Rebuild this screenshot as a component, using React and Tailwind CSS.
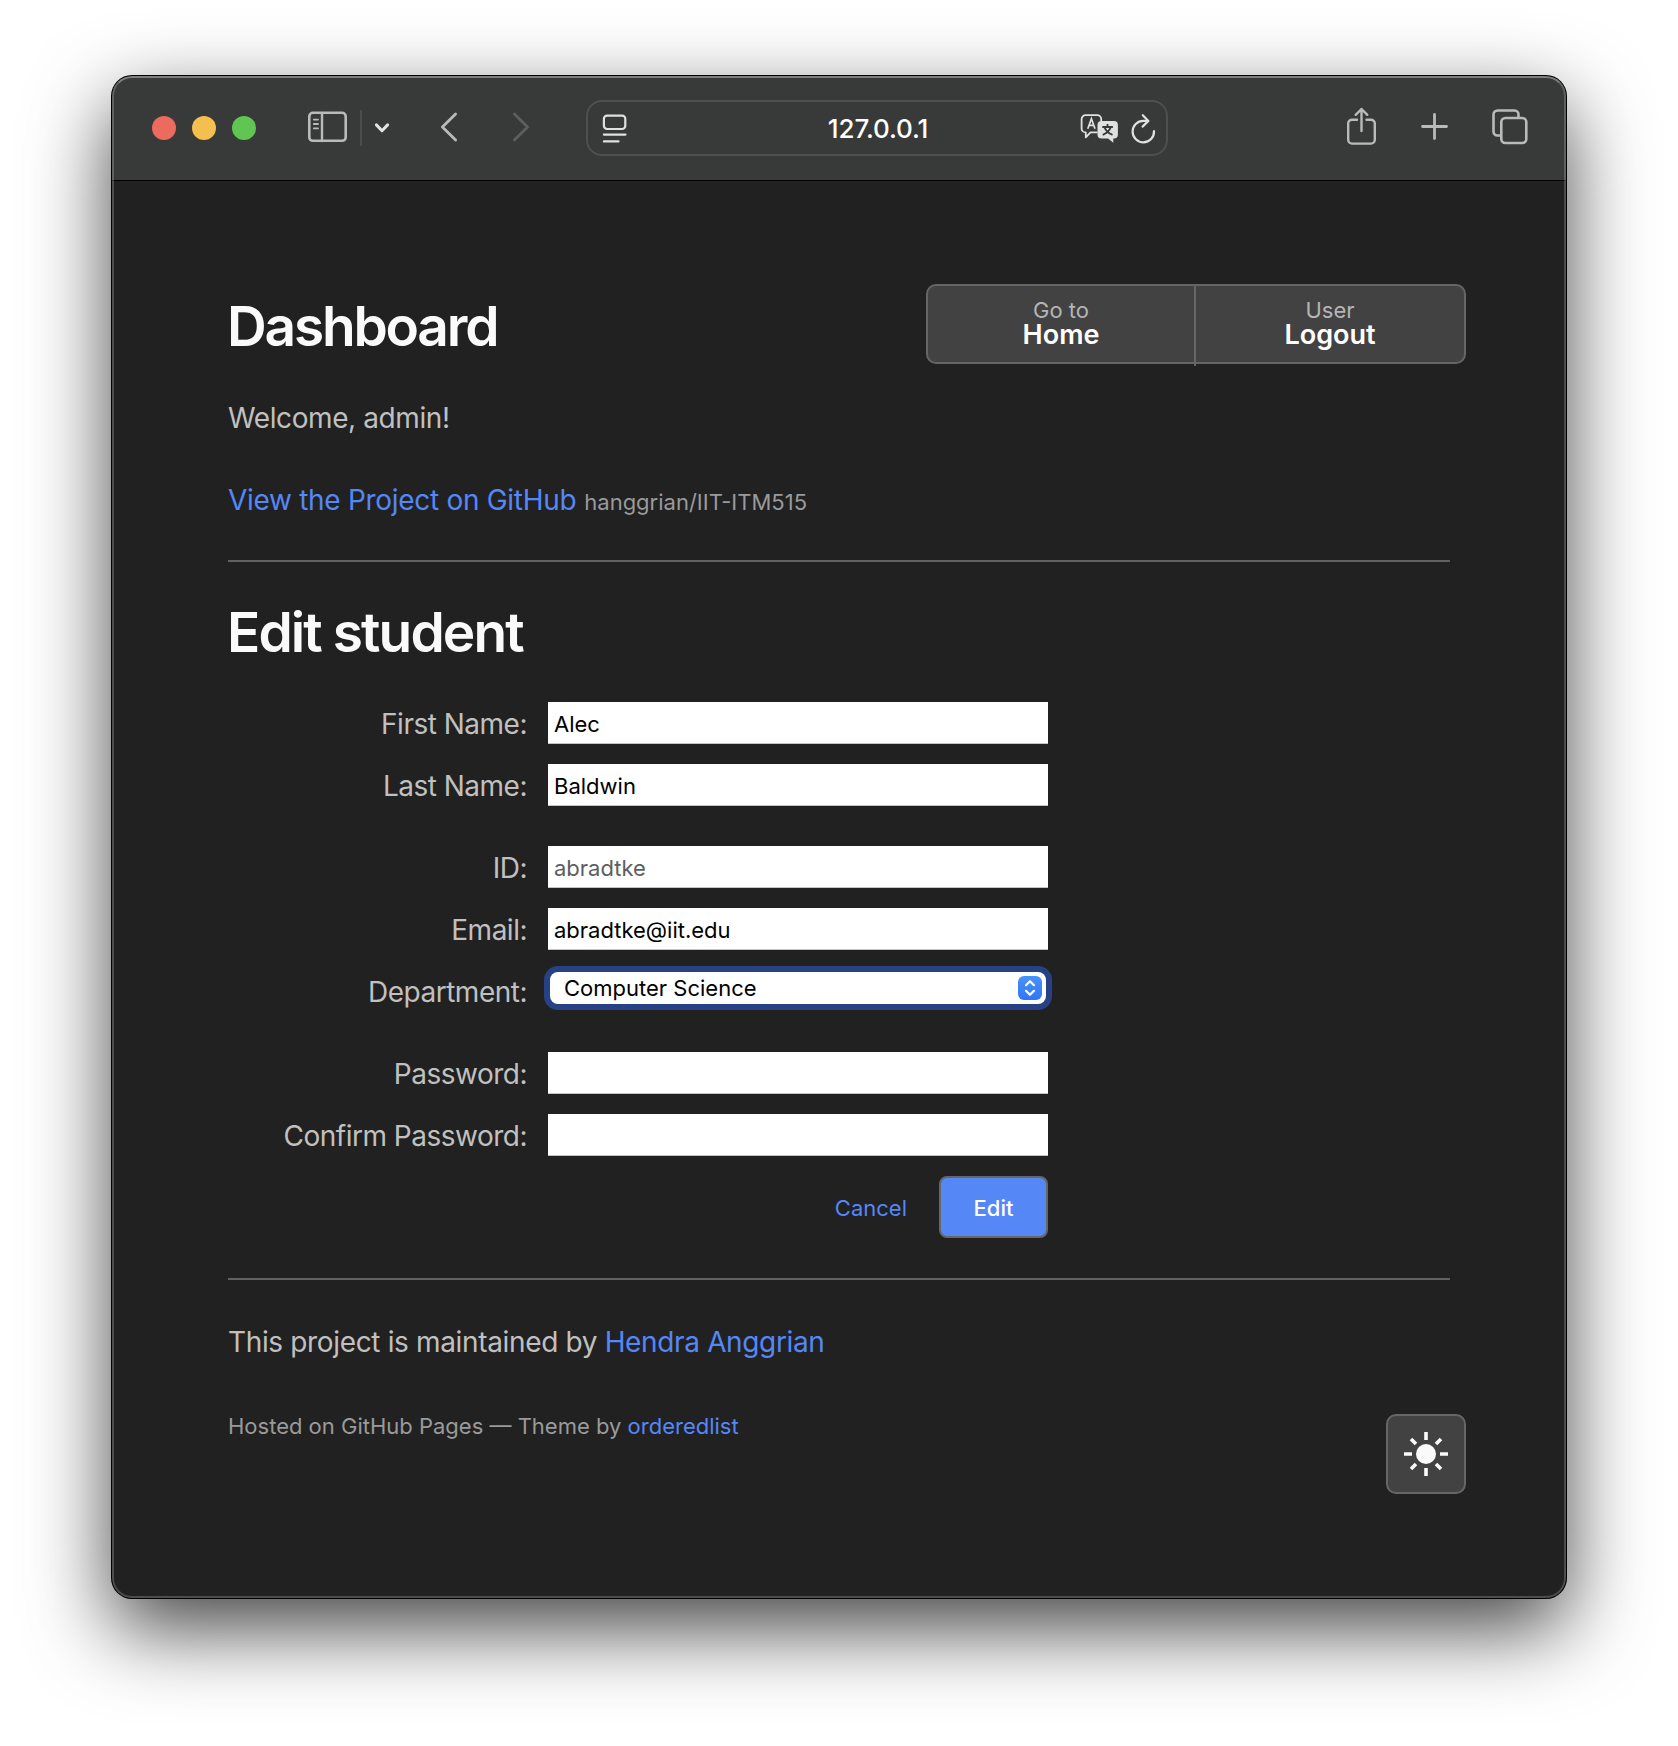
import React from "react";

const linkCls = "text-[#5587f7]";

function SidebarIcon() {
  return (
    <svg width="40" height="32" viewBox="0 0 40 32" fill="none" stroke="#b9baba" strokeLinecap="round">
      <rect x="1.3" y="1.8" width="36.4" height="28" rx="3.6" strokeWidth="2.6" />
      <path d="M14 2v28" strokeWidth="2.4" />
      <path d="M5.8 8.6h4.2M5.8 13h4.2M5.8 17.4h4.2" strokeWidth="1.8" />
    </svg>
  );
}

function Toolbar() {
  return (
    <header className="flex h-26 shrink-0 items-center bg-[#383a39] pl-10 pr-[38px]">
      <div className="flex gap-4">
        <span className="size-6 rounded-full bg-[#ec6a5e]" />
        <span className="size-6 rounded-full bg-[#f4bf4f]" />
        <span className="size-6 rounded-full bg-[#61c554]" />
      </div>
      <div className="mr-[12px] ml-[52px] flex w-10 -translate-y-[1px]"><SidebarIcon /></div>
      <div className="h-9 w-0.5 bg-[#4b4c4b]" />
      <svg className="ml-3" width="16" height="12" viewBox="0 0 16 12" fill="none" stroke="#e2e3e2" strokeWidth="3" strokeLinecap="round" strokeLinejoin="round">
        <path d="M2.4 2.9 8 8.7l5.6-5.8" />
      </svg>
      <svg className="ml-[50px] -translate-y-[1px]" width="18" height="30" viewBox="0 0 18 30" fill="none" stroke="#b9baba" strokeWidth="2.8" strokeLinecap="round" strokeLinejoin="round">
        <path d="M15.6 2 2.4 15l13.2 13" />
      </svg>
      <svg className="ml-[54px] -translate-y-[1px]" width="18" height="30" viewBox="0 0 18 30" fill="none" stroke="#5d5e5d" strokeWidth="2.8" strokeLinecap="round" strokeLinejoin="round">
        <path d="M2.4 2l13.2 13L2.4 28" />
      </svg>
      <div className="ml-[56px] flex h-14 w-[582px] shrink-0 items-center rounded-2xl border-2 border-[#4e504f] px-[10px]">
        <svg className="ml-1" width="26" height="32" viewBox="0 0 26 32" fill="none" stroke="#dfe0df" strokeWidth="2.2" strokeLinecap="round">
          <rect x="1.9" y="3.6" width="21.4" height="13.4" rx="3.2" />
          <path d="M1.9 22.6h21.6M1.9 29.4h14.6" />
        </svg>
        <div className="flex-1 pt-0.5 pl-[49px] text-center text-[26px] leading-none font-medium tracking-[-0.1px] text-white">127.0.0.1</div>
        <svg className="mr-[11px]" width="40" height="32" viewBox="0 0 40 32">
          <path d="M18.5 20.4h-7L6.8 25.4v-5H6.6a4 4 0 0 1-4-4V7.2a4 4 0 0 1 4-4h11.6a4 4 0 0 1 4 4V9" fill="none" stroke="#dfe0df" strokeWidth="1.8" strokeLinejoin="round" />
          <path d="M8.8 16.8 12.4 6.8l3.6 10M10 13.4h4.8" fill="none" stroke="#dfe0df" strokeWidth="1.7" />
          <path d="M22.500 9h12.400a4 4 0 0 1 4 4v9.400a4 4 0 0 1-4 4h-.6v4.400l-5.200-4.400h-6.600a4 4 0 0 1-4-4V13a4 4 0 0 1 4-4Z" fill="#dfe0df" />
          <path d="M28.500 12v2.600M23.300 15h10.600M25.500 15.400c1.400 3.400 4.200 6 8 7.400M31.700 15.400c-1.400 3.400-4.200 6-8 7.400" fill="none" stroke="#383a39" strokeWidth="1.8" />
        </svg>
        <svg width="26" height="32" viewBox="0 0 26 32" fill="none" stroke="#dfe0df" strokeWidth="2.2" strokeLinecap="round" strokeLinejoin="round">
          <path d="M17.200 8.900H13.400A10.700 10.700 0 1 0 24 19.200" />
          <path d="M12.800 3.200 18.400 8.900 12.600 14.600" />
        </svg>
      </div>
      <div className="ml-auto flex items-center">
        <svg className="-translate-y-[2px]" width="32" height="38" viewBox="0 0 32 38" fill="none" stroke="#b9baba" strokeWidth="2.4" strokeLinecap="round" strokeLinejoin="round">
          <path d="M11 12.800H6a3.800 3.800 0 0 0-3.800 3.800v16.200A3.800 3.800 0 0 0 6 36.600h19a3.800 3.800 0 0 0 3.800-3.800V16.600a3.800 3.800 0 0 0-3.800-3.800h-4.500" />
          <path d="M15.500 24V2M9.700 7.800l5.800-5.800 5.800 5.800" />
        </svg>
        <svg className="ml-[43px] -translate-y-[1px]" width="28" height="28" viewBox="0 0 28 28" fill="none" stroke="#b9baba" strokeWidth="2.8" strokeLinecap="round">
          <path d="M13.500 1.500v24M1.500 13.500h24" />
        </svg>
        <svg className="ml-[43px] -translate-y-[1px]" width="36" height="36" viewBox="0 0 36 36" fill="none" stroke="#b9baba" strokeWidth="2.6">
          <rect x="9.300" y="9" width="25" height="25" rx="4" />
          <path d="M9 26.500H5.500a4 4 0 0 1-4-4V5.500a4 4 0 0 1 4-4h17a4 4 0 0 1 4 4v3" />
        </svg>
      </div>
    </header>
  );
}

function Row({ label, children }) {
  return (
    <div className="flex h-[42px] gap-5">
      <label className="w-[300px] pt-[5px] pr-px text-right text-[28px] leading-[34px] tracking-[-0.5px] text-[#c0c0c0]">{label}</label>
      {children}
    </div>
  );
}

function Field({ value, muted }) {
  return (
    <div className={"h-[42px] w-[500px] border-b border-[#c4c4c4] bg-white pt-[7px] pl-[6px] text-[22px] leading-[30px] " + (muted ? "text-[#5e5e5e]" : "text-black")}>
      {value}
    </div>
  );
}

export default function App() {
  return (
    <div className="h-[1746px] w-[1678px] overflow-hidden bg-white pt-[76px] pl-[112px] font-[Inter,sans-serif]">
      <div className="relative flex h-[1522px] w-[1454px] flex-col overflow-hidden rounded-[20px] bg-[#212121] shadow-[0_0_0_1px_#000,0_30px_82px_rgba(0,0,0,0.74)]">
        <Toolbar />
        <div className="h-px bg-black" />
        <main className="relative flex flex-col pt-[103px] pl-[116px]">
          <div className="flex h-20 w-[1238px] justify-between">
            <h1 className="-ml-px pt-[9px] text-[55px] leading-[66px] font-semibold tracking-[-2.2px] text-[#fafafa]">Dashboard</h1>
            <div className="grid h-20 w-[540px] grid-cols-2 rounded-[10px] border-2 border-[#666] bg-[#424242] text-center text-[22px] leading-6 text-[#b5b5b5]">
              <div className="h-20 border-r-2 border-[#666] pt-[12px]">
                <div>Go to</div>
                <div className="text-[27px] leading-[26px] font-semibold text-white">Home</div>
              </div>
              <div className="pt-[12px]">
                <div>User</div>
                <div className="text-[27px] leading-[26px] font-semibold text-white">Logout</div>
              </div>
            </div>
          </div>
          <p className="mt-[37px] text-[28px] leading-[34px] tracking-[-0.4px] text-[#c0c0c0]">Welcome, admin!</p>
          <p className="mt-[48px] flex items-baseline gap-2 text-[28px] leading-[34px]">
            <a className={linkCls + " tracking-[-0.3px]"}>View the Project on GitHub</a>
            <small className="text-[22px] text-[#9a9a9a]">hanggrian/IIT-ITM515</small>
          </p>
          <hr className="mt-[41px] h-0.5 w-[1222px] border-0 bg-[#606160]" />
          <h2 className="mt-[37px] -ml-px text-[55px] leading-[66px] font-semibold tracking-[-1.9px] text-[#fafafa]">Edit student</h2>
          <form className="mt-[37px] flex flex-col gap-5">
            <Row label="First Name:"><Field value="Alec" /></Row>
            <Row label="Last Name:"><Field value="Baldwin" /></Row>
            <div className="mt-5"><Row label="ID:"><Field value="abradtke" muted /></Row></div>
            <Row label="Email:"><Field value="abradtke@iit.edu" /></Row>
            <Row label="Department:">
              <div className="mt-0.5 ml-0.5 flex h-8 w-[496px] items-center justify-between rounded-lg bg-white pr-1 pl-3.5 text-[22px] text-black shadow-[0_0_0_6px_#264284]">
                <span>Computer Science</span>
                <span className="flex size-6 items-center justify-center rounded-md bg-linear-to-b from-[#4a92fb] to-[#2f76f2]">
                  <svg width="12" height="18" viewBox="0 0 12 18" fill="none" stroke="#fff" strokeWidth="2.2" strokeLinecap="round" strokeLinejoin="round">
                    <path d="M2 6.200 6 2.200l4 4M2 11.800l4 4 4-4" />
                  </svg>
                </span>
              </div>
            </Row>
            <div className="mt-5"><Row label="Password:"><Field /></Row></div>
            <Row label="Confirm Password:"><Field /></Row>
            <div className="flex h-[62px] w-[820px] items-center justify-end gap-8 text-[22px]">
              <a className={linkCls + " pt-0.5"}>Cancel</a>
              <span className="flex h-[62px] w-[109px] items-center justify-center rounded-lg border-2 border-[#666] bg-[#5587f7] pt-0.5 font-medium text-white">Edit</span>
            </div>
          </form>
          <hr className="mt-[40px] h-0.5 w-[1222px] border-0 bg-[#606160]" />
          <footer className="flex w-[1238px] justify-between">
            <div>
              <p className="mt-[45px] text-[28px] leading-[34px] tracking-[-0.35px] text-[#c0c0c0]">This project is maintained by <a className={linkCls}>Hendra Anggrian</a></p>
              <p className="mt-[53px] text-[22px] leading-[28px] text-[#9a9a9a]">Hosted on GitHub Pages — Theme by <a className={linkCls}>orderedlist</a></p>
            </div>
            <div className="mt-[134px] flex size-20 items-center justify-center rounded-[10px] border-2 border-[#666] bg-[#424242]">
              <svg width="44" height="44" viewBox="-22 -22 44 44" stroke="#fafafa" strokeWidth="3.6">
                <circle r="10" fill="#fafafa" stroke="none" />
                <path d="M0-22v8M0 14v8M-22 0h8M14 0h8M-15-15l5 5M15-15l-5 5M-15 15l5-5M15 15l-5-5" />
              </svg>
            </div>
          </footer>
        </main>
        <div className="pointer-events-none absolute inset-0 rounded-[20px] border-2 border-white/20 border-t-white/35" />
      </div>
    </div>
  );
}
